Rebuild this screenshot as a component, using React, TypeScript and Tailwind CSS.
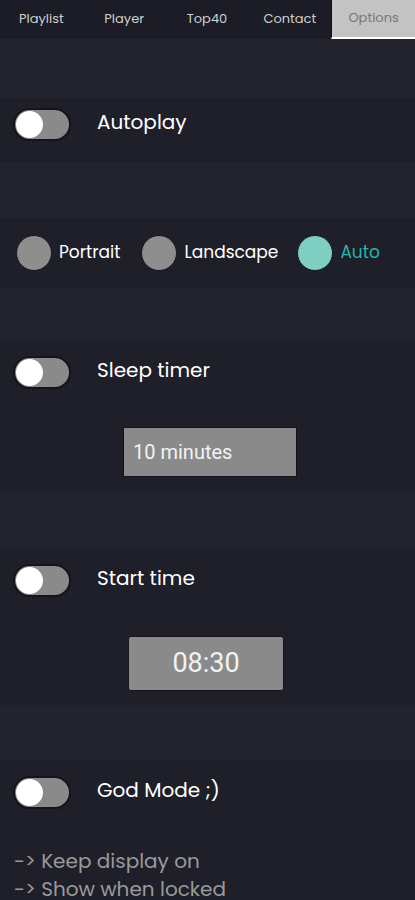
import { useState } from "react";

const TABS = ["Playlist", "Player", "Top40", "Contact", "Options"];

function Toggle({ on, onChange }: { on: boolean; onChange: () => void }) {
  return (
    <button
      onClick={onChange}
      className="relative w-[58px] h-[33px] rounded-full bg-[#8a8a8a] border-2 border-[#14141c] shrink-0"
    >
      <span
        className={`absolute top-[1px] w-[27px] h-[27px] rounded-full bg-white ${
          on ? "left-[27px]" : "left-[1px]"
        }`}
      />
    </button>
  );
}

function ToggleRow({ label, on, onChange }: { label: string; on: boolean; onChange: () => void }) {
  return (
    <div className="flex items-center pl-[13px] h-[33px]">
      <Toggle on={on} onChange={onChange} />
      <span className="ml-[26px] pb-[5px] text-[20px] text-white">{label}</span>
    </div>
  );
}

export default function App() {
  const [toggles, setToggles] = useState({ autoplay: false, sleep: false, start: false, god: false });
  const [orientation, setOrientation] = useState("Auto");
  const flip = (k: keyof typeof toggles) => setToggles((t) => ({ ...t, [k]: !t[k] }));

  return (
    <div className="min-h-[900px] bg-[#23232e] font-['Poppins','Lato',sans-serif] overflow-hidden">
      {/* Nav */}
      <div className="flex h-[39px] bg-[#1c1c26]">
        {TABS.map((t) => (
          <div
            key={t}
            className={`flex-1 flex items-center justify-center pb-[2px] text-[13px] ${
              t === "Options"
                ? "bg-[#c3c3c3] text-[#777] border-b-2 border-white border-l border-l-[#111]"
                : "text-[#cfcfcf]"
            }`}
          >
            {t}
          </div>
        ))}
      </div>

      {/* Autoplay */}
      <div className="mt-[59px] bg-[#1f1f2a] h-[64px] pt-[10px]">
        <ToggleRow label="Autoplay" on={toggles.autoplay} onChange={() => flip("autoplay")} />
      </div>

      {/* Orientation */}
      <div className="mt-[56px] bg-[#1f1f2a] h-[70px] flex items-center pl-[16px]">
        {["Portrait", "Landscape", "Auto"].map((o, i) => (
          <button
            key={o}
            onClick={() => setOrientation(o)}
            className={`flex items-center ${i === 1 ? "ml-[21px]" : i === 2 ? "ml-[19px]" : ""}`}
          >
            <span
              className={`w-[36px] h-[36px] rounded-full border border-[#14141c] ${
                orientation === o ? "bg-[#7ecfc2]" : "bg-[#8e8e8e]"
              }`}
            />
            <span
              className={`ml-[7px] text-[17px] ${orientation === o ? "text-[#27b3ae]" : "text-white"}`}
            >
              {o}
            </span>
          </button>
        ))}
      </div>

      {/* Sleep timer */}
      <div className="mt-[52px] bg-[#1f1f2a] h-[152px] pt-[16px]">
        <ToggleRow label="Sleep timer" on={toggles.sleep} onChange={() => flip("sleep")} />
        <div className="mt-[38px] ml-[123px] w-[174px] h-[50px] bg-[#8a8a8a] border border-[#14141c] flex items-center pl-[9px] text-[20px] text-[#f2f2f2] font-['Roboto',sans-serif]">
          10 minutes
        </div>
      </div>

      {/* Start time */}
      <div className="mt-[56px] bg-[#1f1f2a] h-[157px] pt-[16px]">
        <ToggleRow label="Start time" on={toggles.start} onChange={() => flip("start")} />
        <div className="mt-[39px] ml-[128px] w-[156px] h-[55px] bg-[#8a8a8a] border border-[#14141c] rounded-[3px] flex items-center justify-center text-[27px] text-[#f2f2f2] font-['Roboto',sans-serif]">
          08:30
        </div>
      </div>

      {/* God mode */}
      <div className="mt-[55px] bg-[#1f1f2a] h-[160px] pt-[16px]">
        <ToggleRow label="God Mode ;)" on={toggles.god} onChange={() => flip("god")} />
        <div className="mt-[38px] pl-[14px] text-[20px] leading-[28px] text-[#9a9a9a]">
          <div>-&gt; Keep display on</div>
          <div>-&gt; Show when locked</div>
        </div>
      </div>
    </div>
  );
}
